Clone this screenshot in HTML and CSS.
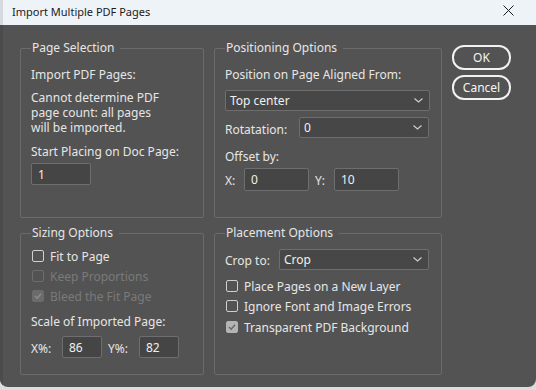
FILE: index.html
```html
<!DOCTYPE html>
<html>
<head>
<meta charset="utf-8">
<link rel="stylesheet" href="styles.css">
</head>
<body>
<div class="window">
  <div class="titlebar">
    <span class="title">Import Multiple PDF Pages</span>
    <svg class="close" width="11" height="11" viewBox="0 0 11 11"><path d="M0.5 0.5 L10.5 10.5 M10.5 0.5 L0.5 10.5" stroke="#1a1a1a" stroke-width="1" fill="none"/></svg>
  </div>
  <div class="body">
    <div class="groups">
      <fieldset class="group">
        <legend>Page Selection</legend>
        <div class="lbl first">Import PDF Pages:</div>
        <div class="note">
          <div class="lbl">Cannot determine PDF</div>
          <div class="lbl">page count: all pages</div>
          <div class="lbl">will be imported.</div>
        </div>
        <div class="lbl start">Start Placing on Doc Page:</div>
        <div class="input page-input">1</div>
      </fieldset>

      <fieldset class="group">
        <legend>Positioning Options</legend>
        <div class="lbl first">Position on Page Aligned From:</div>
        <div class="select align-select"><span>Top center</span><svg class="chev" width="9" height="5" viewBox="0 0 9 5"><path d="M0.5 0.5 L4.5 4 L8.5 0.5" stroke="#d0d0d0" stroke-width="1.1" fill="none"/></svg></div>
        <div class="row rot-row">
          <span class="lbl rot-lbl">Rotatation:</span>
          <div class="select rot-select"><span>0</span><svg class="chev" width="9" height="5" viewBox="0 0 9 5"><path d="M0.5 0.5 L4.5 4 L8.5 0.5" stroke="#d0d0d0" stroke-width="1.1" fill="none"/></svg></div>
        </div>
        <div class="lbl offset">Offset by:</div>
        <div class="row xy-row">
          <span class="lbl xy-lbl">X:</span>
          <div class="input off-input">0</div>
          <span class="lbl xy-lbl y-lbl">Y:</span>
          <div class="input off-input">10</div>
        </div>
      </fieldset>

      <fieldset class="group">
        <legend>Sizing Options</legend>
        <div class="checks sizing-checks">
          <div class="check"><span class="box"></span><span class="lbl">Fit to Page</span></div>
          <div class="check disabled"><span class="box"></span><span class="lbl">Keep Proportions</span></div>
          <div class="check disabled checked"><span class="box"><svg width="10" height="10" viewBox="0 0 10 10"><path d="M2 5 L4.2 7.2 L8 2.8" stroke="#8c8c8c" stroke-width="1.6" fill="none"/></svg></span><span class="lbl">Bleed the Fit Page</span></div>
        </div>
        <div class="lbl scale">Scale of Imported Page:</div>
        <div class="row pct-row">
          <span class="lbl pct-lbl">X%:</span>
          <div class="input pct-input">86</div>
          <span class="lbl pct-lbl y-pct">Y%:</span>
          <div class="input pct-input">82</div>
        </div>
      </fieldset>

      <fieldset class="group">
        <legend>Placement Options</legend>
        <div class="row crop-row">
          <span class="lbl crop-lbl">Crop to:</span>
          <div class="select crop-select"><span>Crop</span><svg class="chev" width="9" height="5" viewBox="0 0 9 5"><path d="M0.5 0.5 L4.5 4 L8.5 0.5" stroke="#d0d0d0" stroke-width="1.1" fill="none"/></svg></div>
        </div>
        <div class="checks place-checks">
          <div class="check"><span class="box"></span><span class="lbl">Place Pages on a New Layer</span></div>
          <div class="check"><span class="box"></span><span class="lbl">Ignore Font and Image Errors</span></div>
          <div class="check checked-on"><span class="box"><svg width="10" height="10" viewBox="0 0 10 10"><path d="M2 5 L4.2 7.2 L8 2.8" stroke="#6a6a6a" stroke-width="1.6" fill="none"/></svg></span><span class="lbl">Transparent PDF Background</span></div>
        </div>
      </fieldset>
    </div>
    <div class="buttons">
      <button class="btn">OK</button>
      <button class="btn">Cancel</button>
    </div>
  </div>
</div>
</body>
</html>
```

FILE: styles.css
```css
html, body {
  margin: 0;
  padding: 0;
  background: #dcdcdc;
}
body {
  width: 536px;
  height: 390px;
  overflow: hidden;
  font-family: "Noto Sans", "Open Sans", sans-serif;
  font-size: 12px;
}
.window {
  width: 536px;
  height: 387px;
  display: flex;
  flex-direction: column;
  background: #535353;
  border-bottom-left-radius: 8px;
  border-bottom-right-radius: 8px;
  overflow: hidden;
}
.titlebar {
  height: 25px;
  flex: none;
  background: #eef3f8;
  display: flex;
  align-items: center;
  justify-content: space-between;
  padding: 0 22px 0 9px;
  border-left: 3px solid #d6dade;
  box-sizing: border-box;
}
.title {
  color: #1a1a1a;
  font-size: 11px;
  line-height: 14px;
  margin-top: -2px;
}
.close {
  margin-top: -4px;
}
.body {
  flex: 1;
  display: flex;
  align-items: flex-start;
  padding: 16px 0 0 17px;
  border-left: 3px solid #4b4b4b;
  color: #e6e6e6;
}
.groups {
  display: grid;
  grid-template-columns: 184px 228px;
  grid-template-rows: 177px 149px;
  column-gap: 10px;
  row-gap: 8px;
}
.group {
  margin: 0;
  min-width: 0;
  border: 1px solid #6b6b6b;
  border-radius: 2px;
  padding: 0 10px 0 10px;
  display: flex;
  flex-direction: column;
  align-items: flex-start;
}
.group legend {
  padding: 0 6px 0 1px;
  margin-left: 0;
  line-height: 14px;
  color: #e6e6e6;
}
.lbl {
  line-height: 15px;
  white-space: nowrap;
}
.first { margin-top: 12px; }
.note { margin-top: 8px; display: flex; flex-direction: column; }
.start { margin-top: 9px; }
.input {
  box-sizing: border-box;
  background: #454545;
  border: 1px solid #6e6e6e;
  border-radius: 2px;
  color: #f0f0f0;
  padding-left: 6px;
  display: flex;
  align-items: center;
}
.page-input {
  margin-top: 4px;
  width: 60px;
  height: 22px;
}
.select {
  box-sizing: border-box;
  background: #474747;
  border: 1px solid #6e6e6e;
  border-radius: 2px;
  color: #f0f0f0;
  padding: 0 6px 0 4px;
  height: 21px;
  display: flex;
  align-items: center;
  justify-content: space-between;
}
.align-select {
  margin-top: 8px;
  width: 205px;
}
.row {
  display: flex;
  align-items: center;
}
.rot-row { margin-top: 6px; }
.rot-lbl { width: 74px; padding-top: 3px; }
.rot-select { width: 130px; }
.offset { margin-top: 11px; }
.xy-row { margin-top: 4px; }
.xy-lbl { width: 19px; padding-top: 2px; }
.y-lbl { margin-left: 6px; }
.off-input { width: 65px; height: 23px; }

.checks {
  display: flex;
  flex-direction: column;
}
.check {
  height: 20px;
  display: flex;
  align-items: center;
}
.box {
  box-sizing: border-box;
  width: 12px;
  height: 12px;
  border: 1px solid #cfcfcf;
  border-radius: 2px;
  margin-right: 6px;
  margin-left: 1px;
  display: flex;
  align-items: center;
  justify-content: center;
}
.check.disabled .lbl { color: #7a7a7a; }
.check.disabled .box { border-color: #6d6d6d; }
.check.disabled.checked .box { background: #6b6b6b; border-color: #6b6b6b; }
.check.checked-on .box { background: #b4b4b4; border-color: #b4b4b4; }
.sizing-checks { margin-top: 6px; }
.scale { margin-top: 8px; }
.pct-row { margin-top: 7px; }
.pct-lbl { width: 31px; padding-top: 2px; }
.y-pct { margin-left: 6px; }
.pct-input { width: 40px; height: 22px; }

.crop-row { margin-top: 9px; }
.crop-lbl { width: 54px; padding-top: 2px; }
.crop-select { width: 150px; }
.place-checks { margin-top: 6px; }
.place-checks .check:last-child { margin-top: 1px; }

.buttons {
  display: flex;
  flex-direction: column;
  gap: 5px;
  margin-left: 10px;
  margin-top: 4px;
}
.btn {
  box-sizing: border-box;
  width: 59px;
  height: 25px;
  border: 2px solid #f2f2f2;
  border-radius: 12px;
  background: #535353;
  color: #f5f5f5;
  font-family: "Noto Sans", "Open Sans", sans-serif;
  font-size: 12px;
  padding: 0;
  line-height: 14px;
}
```
